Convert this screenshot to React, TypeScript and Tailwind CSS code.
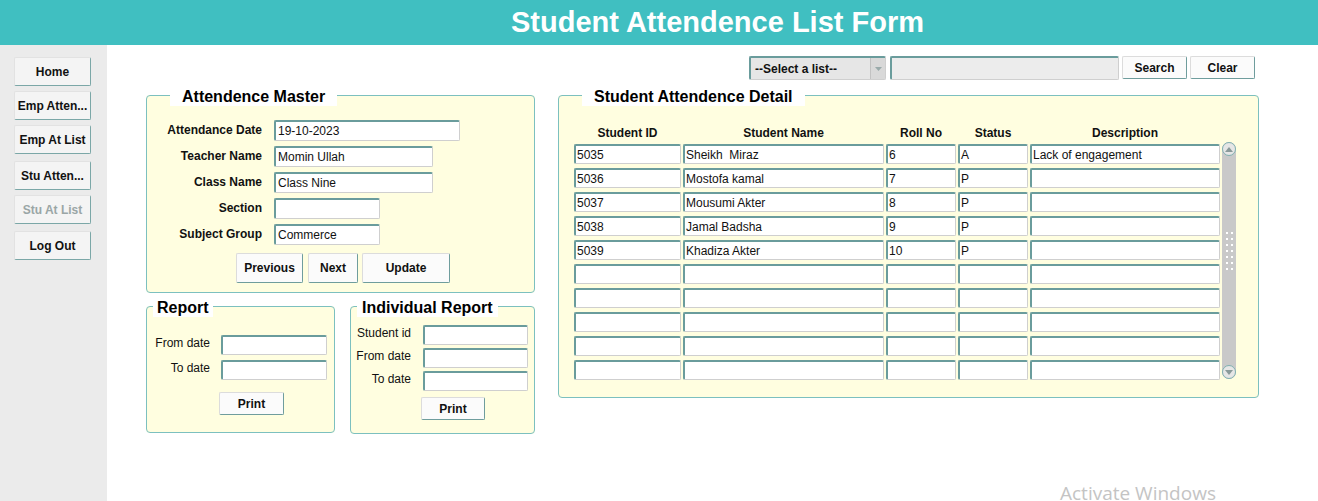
import React from "react"

const font = { fontFamily: '"Liberation Sans", Arial, sans-serif' }

const inputCls =
  "bg-white border-t-2 border-l-2 border-r border-b border-t-[#6a9c9c] border-l-[#6a9c9c] border-r-[#cfcfcf] border-b-[#cfcfcf] rounded-[2px] text-[12px] text-[#111] px-[1px] flex items-center leading-none whitespace-pre"

const btnCls =
  "bg-[#fbfbfb] border border-[#dcdcdc] border-r-[#6f9d9d] border-b-[#6f9d9d] rounded-[2px] text-[12px] font-bold text-[#111] flex items-center justify-center"

const sideButtons = [
  { label: "Home", cls: "mt-0" },
  { label: "Emp Atten...", cls: "mt-[5px]" },
  { label: "Emp At List", cls: "mt-[5px]" },
  { label: "Stu Atten...", cls: "mt-[7px]" },
  { label: "Stu At List", cls: "mt-[5px]", disabled: true },
  { label: "Log Out", cls: "mt-[7px]" },
]

const rows = [
  ["5035", "Sheikh  Miraz", "6", "A", "Lack of engagement"],
  ["5036", "Mostofa kamal", "7", "P", ""],
  ["5037", "Mousumi Akter", "8", "P", ""],
  ["5038", "Jamal Badsha", "9", "P", ""],
  ["5039", "Khadiza Akter", "10", "P", ""],
  ["", "", "", "", ""],
  ["", "", "", "", ""],
  ["", "", "", "", ""],
  ["", "", "", "", ""],
  ["", "", "", "", ""],
]

const colW = ["w-[107px]", "w-[201px]", "w-[70px]", "w-[70px]", "w-[190px]"]

const Legend = ({ text, cls }: { text: string; cls: string }) => (
  <legend className={`bg-white text-[16px] font-bold text-black leading-[19px] pt-[2px] ${cls}`}>{text}</legend>
)

const Field = ({ label, w, value = "" }: { label: string; w: string; value?: string }) => (
  <div className="flex items-center">
    <div className="w-[115px] text-right text-[12px] font-bold text-[#111] -mt-[2px]">{label}</div>
    <div className={`${inputCls} ${w} h-[21px] ml-[12px] text-[12.5px] px-[2px]`}>{value}</div>
  </div>
)

const ScrollBar = () => (
  <div className="w-[14px] h-[237px] -mt-[2px] ml-[2px] bg-[#c9c9c9] rounded-[7px] flex flex-col items-center">
    <div className="w-[14px] h-[14px] rounded-full border border-[#7fb0b0] bg-[#e6e6e6] flex items-center justify-center">
      <svg width="8" height="5" viewBox="0 0 8 5">
        <path d="M0 5 L4 0 L8 5 Z" fill="#8a9a9a" />
      </svg>
    </div>
    <div className="mt-[76px] grid grid-cols-2 gap-x-[3px] gap-y-[4px]">
      {Array.from({ length: 14 }).map((_, i) => (
        <div key={i} className="w-[2px] h-[2px] bg-white" />
      ))}
    </div>
    <div className="mt-auto w-[14px] h-[14px] rounded-full border border-[#7fb0b0] bg-[#e6e6e6] flex items-center justify-center">
      <svg width="8" height="5" viewBox="0 0 8 5">
        <path d="M0 0 L4 5 L8 0 Z" fill="#8a9a9a" />
      </svg>
    </div>
  </div>
)

export default function App() {
  return (
    <div className="w-[1318px] h-[501px] overflow-hidden flex flex-col bg-white relative" style={font}>
      <div className="h-[45px] bg-[#40bfc1] flex items-center justify-center pl-[117px]">
        <h1 className="text-white font-bold text-[29px] leading-none">Student Attendence List Form</h1>
      </div>

      <div className="flex flex-1">
        <aside className="w-[107px] bg-[#ebebeb] pt-[12px] pl-[14px] flex flex-col">
          {sideButtons.map((b) => (
            <div
              key={b.label}
              className={`${b.cls} w-[77px] h-[29px] bg-[#f4f4f4] border border-[#e2e2e2] border-r-[#7ba7a7] border-b-[#7ba7a7] rounded-[2px] flex items-center justify-center text-[12px] font-bold ${
                b.disabled ? "text-[#9aa6a6]" : "text-[#111]"
              }`}
            >
              {b.label}
            </div>
          ))}
        </aside>

        <main className="flex-1 flex flex-col">
          <div className="flex justify-end pr-[63px] pt-[11px] h-[35px]">
            <div className="w-[137px] h-[24px] bg-[#e6e6e6] border-t-2 border-l-2 border-r border-b border-t-[#6a9c9c] border-l-[#6a9c9c] border-r-[#cfcfcf] border-b-[#cfcfcf] rounded-[2px] flex items-center">
              <span className="flex-1 pl-[4px] text-[12px] font-bold text-[#111]">--Select a list--</span>
              <div className="w-[15px] h-full bg-[#d9d9d9] border-l border-[#c2c2c2] flex items-center justify-center">
                <svg width="7" height="4" viewBox="0 0 7 4">
                  <path d="M0 0 L3.5 4 L7 0 Z" fill="#9aa" />
                </svg>
              </div>
            </div>
            <div className="ml-[4px] w-[229px] h-[24px] bg-[#ececec] border-t-2 border-l-2 border-r border-b border-t-[#6a9c9c] border-l-[#6a9c9c] border-r-[#cfcfcf] border-b-[#cfcfcf] rounded-[2px]" />
            <div className={`${btnCls} ml-[3px] w-[65px] h-[23px] bg-[#f2f2f2]`}>Search</div>
            <div className={`${btnCls} ml-[3px] w-[65px] h-[23px] bg-[#f2f2f2]`}>Clear</div>
          </div>

          <div className="flex pl-[39px] mt-[5px]">
            <div className="w-[389px] flex flex-col">
              <fieldset className="border border-[#7cc0bf] rounded-[4px] bg-[#fffee0] pt-[14px] pb-[9px]">
                <Legend text="Attendence Master" cls="ml-[23px] px-[12px]" />
                <div className="flex flex-col gap-[5px]">
                  <Field label="Attendance Date" w="w-[186px]" value="19-10-2023" />
                  <Field label="Teacher Name" w="w-[159px]" value="Momin Ullah" />
                  <Field label="Class Name" w="w-[159px]" value="Class Nine" />
                  <Field label="Section" w="w-[106px]" />
                  <Field label="Subject Group" w="w-[106px]" value="Commerce" />
                </div>
                <div className="flex pl-[89px] mt-[8px]">
                  <div className={`${btnCls} w-[67px] h-[30px]`}>Previous</div>
                  <div className={`${btnCls} w-[50px] h-[30px] ml-[5px]`}>Next</div>
                  <div className={`${btnCls} w-[88px] h-[30px] ml-[4px]`}>Update</div>
                </div>
              </fieldset>

              <div className="flex mt-[3px]">
                <fieldset className="w-[189px] h-[137px] border border-[#7cc0bf] rounded-[4px] bg-[#fffee0] pt-[18px]">
                  <Legend text="Report" cls="ml-[6px] px-[4px]" />
                  <div className="flex flex-col gap-[5px]">
                    {["From date", "To date"].map((l) => (
                      <div key={l} className="flex items-center">
                        <div className="w-[63px] text-right text-[12px] text-[#111] -mt-[4px]">{l}</div>
                        <div className={`${inputCls} w-[106px] h-[20px] ml-[11px]`} />
                      </div>
                    ))}
                  </div>
                  <div className={`${btnCls} w-[65px] h-[23px] ml-[72px] mt-[12px]`}>Print</div>
                </fieldset>

                <fieldset className="w-[185px] h-[138px] ml-[15px] border border-[#7cc0bf] rounded-[4px] bg-[#fffee0] pt-[8px]">
                  <Legend text="Individual Report" cls="ml-[6px] px-[5px]" />
                  <div className="flex flex-col gap-[3px]">
                    {["Student id", "From date", "To date"].map((l) => (
                      <div key={l} className="flex items-center">
                        <div className="w-[60px] text-right text-[12px] text-[#111] -mt-[4px]">{l}</div>
                        <div className={`${inputCls} w-[105px] h-[20px] ml-[12px]`} />
                      </div>
                    ))}
                  </div>
                  <div className={`${btnCls} w-[64px] h-[23px] ml-[70px] mt-[6px]`}>Print</div>
                </fieldset>
              </div>
            </div>

            <fieldset className="ml-[23px] w-[701px] h-[313px] border border-[#7cc0bf] rounded-[4px] bg-[#fffee0] pt-[18px] pl-[15px]">
              <Legend text="Student Attendence Detail" cls="ml-[8px] px-[12px]" />
              <div className="flex gap-[2px] h-[16px] mb-[4px] text-[12px] font-bold text-[#111]">
                {["Student ID", "Student Name", "Roll No", "Status", "Description"].map((h, i) => (
                  <div key={h} className={`${colW[i]} text-center`}>
                    {h}
                  </div>
                ))}
              </div>
              <div className="flex">
                <div className="flex flex-col gap-[4px]">
                  {rows.map((r, ri) => (
                    <div key={ri} className="flex gap-[2px]">
                      {r.map((c, ci) => (
                        <div key={ci} className={`${inputCls} ${colW[ci]} h-[20px]`}>
                          {c}
                        </div>
                      ))}
                    </div>
                  ))}
                </div>
                <ScrollBar />
              </div>
            </fieldset>
          </div>
        </main>
      </div>

      <div
        className="absolute left-[1060px] top-[484px] text-[19px] text-[#c4c4c4] leading-none"
        style={{ fontFamily: '"Open Sans", "Noto Sans", sans-serif' }}
      >
        Activate Windows
      </div>
    </div>
  )
}
